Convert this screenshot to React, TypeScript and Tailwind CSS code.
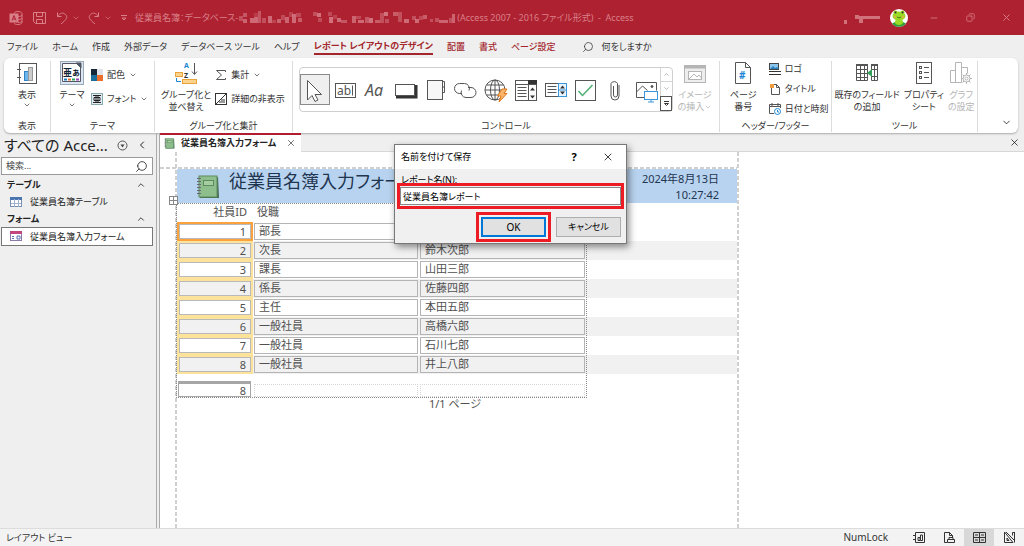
import React, { useState } from 'react';
import { ChevronDown, ChevronUp, ChevronLeft, Search, X, Minus, Copy } from 'lucide-react';

// --- DATA ---
const EMPLOYEES = [
  { id: 1, post: '部長', name: '田中一郎' },
  { id: 2, post: '次長', name: '鈴木次郎' },
  { id: 3, post: '課長', name: '山田三郎' },
  { id: 4, post: '係長', name: '佐藤四郎' },
  { id: 5, post: '主任', name: '本田五郎' },
  { id: 6, post: '一般社員', name: '高橋六郎' },
  { id: 7, post: '一般社員', name: '石川七郎' },
  { id: 8, post: '一般社員', name: '井上八郎' },
];

const MENU = ['ファイル', 'ホーム', '作成', '外部データ', 'データベース ツール', 'ヘルプ'];
const CONTEXT_MENU = ['配置', '書式', 'ページ設定'];

// masked path in the title bar: x, y, w, h, opacity
const MASK = [
  [1, 7, 4, 5, 35], [5, 4, 4, 4, 40], [5, 10, 4, 4, 50], [12, 9, 4, 5, 55], [16, 4, 4, 4, 20], [16, 8, 4, 6, 55],
  [20, 2, 3, 12, 40], [24, 9, 4, 5, 35], [30, 7, 4, 7, 55], [34, 11, 4, 3, 25], [39, 10, 4, 4, 50], [43, 6, 4, 5, 30],
  [47, 8, 4, 6, 50], [51, 3, 4, 5, 25], [54, 5, 4, 9, 55], [58, 4, 5, 4, 30], [60, 9, 4, 4, 45], [75, 3, 4, 4, 35],
  [79, 4, 4, 4, 60], [80, 9, 4, 4, 30], [90, 3, 4, 4, 30], [91, 8, 4, 6, 60], [95, 6, 4, 4, 25], [99, 9, 4, 4, 55],
  [103, 11, 6, 3, 40], [114, 7, 4, 7, 50], [118, 7, 5, 3, 30], [120, 11, 6, 3, 55], [127, 8, 4, 6, 40], [131, 9, 4, 5, 60],
  [137, 11, 5, 3, 45], [142, 4, 4, 10, 35], [146, 3, 4, 4, 60], [147, 10, 4, 4, 35], [155, 3, 5, 4, 45], [160, 3, 4, 10, 35],
  [166, 10, 5, 4, 55], [174, 7, 4, 4, 35], [177, 10, 4, 4, 55], [181, 7, 4, 4, 30], [185, 6, 4, 4, 45], [192, 10, 3, 3, 35],
  [197, 9, 4, 4, 35], [201, 11, 9, 3, 50], [211, 9, 3, 5, 35], [214, 5, 3, 9, 50],
];

type ArtProps = { w?: number; h?: number; children: React.ReactNode };

const Art = ({ w = 24, h = 24, children }: ArtProps) => (
  <svg width={w} height={h} viewBox={`0 0 ${w} ${h}`} fill="none" stroke="#555" strokeWidth="1" className="block shrink-0" aria-hidden="true">
    {children}
  </svg>
);

// --- RIBBON PIECES ---

const Group = ({ label, className, children }: { label: string; className: string; children: React.ReactNode }) => (
  <div className={`flex flex-col border-r border-[#dcdcdc] ${className}`}>
    <div className="flex flex-1">{children}</div>
    <div className="text-center leading-3">{label}</div>
  </div>
);

const BigButton = ({ icon, lines, caret, disabled }: { icon: React.ReactNode; lines: string[]; caret?: boolean; disabled?: boolean }) => (
  <button disabled={disabled} className={`flex flex-col items-center whitespace-nowrap leading-3 ${disabled ? 'text-[#b5b5b5]' : ''}`}>
    <span className="mb-1 flex h-6 items-center">{icon}</span>
    {lines.map((line) => <span key={line}>{line}</span>)}
    {caret && <ChevronDown size={8} />}
  </button>
);

const SmallButton = ({ icon, label, caret }: { icon: React.ReactNode; label: string; caret?: boolean }) => (
  <button className="flex items-center gap-1 whitespace-nowrap leading-3">
    {icon}
    <span>{label}</span>
    {caret && <ChevronDown size={8} />}
  </button>
);

const CONTROLS: { name: string; art: React.ReactNode }[] = [
  { name: '選択', art: <path d="M7.500 5.500V25l4.500-4.500 3 6 3-1.500-3-5.500h6.500z" fill="#fff" /> },
  {
    name: 'テキスト ボックス',
    art: (
      <>
        <rect x="5.500" y="8.500" width="20" height="14" />
        <text x="7" y="20" fontSize="12" fill="#555" stroke="none">ab</text>
        <path d="M22.500 10.500v10" />
      </>
    ),
  },
  { name: 'ラベル', art: <text x="5" y="21" fontSize="16" fontStyle="italic" fill="#555" stroke="none">Aa</text> },
  { name: 'ボタン', art: <><path d="M6 22h20V10" stroke="#333" strokeWidth="3" /><rect x="5.500" y="9.500" width="19" height="11" fill="#fff" /></> },
  { name: 'タブ コントロール', art: <><rect x="7.500" y="5.500" width="15" height="19" fill="#f7f7f7" /><path d="M22.500 6.500h2v11h-2M22.500 12h2" /></> },
  {
    name: 'リンク',
    art: (
      <>
        <path d="M12 18.500h-2.500a5 5 0 0 1 0-10h5a5 5 0 0 1 4.500 7" />
        <path d="M18 12.500h3a5 5 0 0 1 0 10h-5a5 5 0 0 1-4.500-7" />
      </>
    ),
  },
  {
    name: 'Web ブラウザー コントロール',
    art: (
      <>
        <circle cx="15" cy="15" r="10" />
        <ellipse cx="15" cy="15" rx="4.500" ry="10" />
        <path d="M5 15h20M6.500 10h17M6.500 20h17M15 5v20" />
        <path d="M22 14h5l-3 4.500h3L19 27l2-6h-3.500z" fill="#fbb56b" stroke="#e07a1c" />
      </>
    ),
  },
  {
    name: 'コンボ ボックス',
    art: (
      <>
        <rect x="5.500" y="5.500" width="21" height="20" />
        <path d="M5.500 9.500h21M18.500 9.500v16M7.500 12.500h9M7.500 15.500h9M7.500 18.500h9M7.500 21.500h9" />
        <rect x="18" y="5" width="9" height="4" fill="#333" stroke="none" />
        <path d="M20 15.500h5l-2.500-3zM20 20.500h5l-2.500 3z" fill="#333" stroke="none" />
      </>
    ),
  },
  {
    name: 'リスト ボックス',
    art: (
      <>
        <rect x="5.500" y="8.500" width="13" height="13" />
        <path d="M7.500 11.500h9M7.500 14.500h9M7.500 17.500h9" />
        <rect x="18.500" y="8.500" width="8" height="13" stroke="#3a96dd" fill="#eaf5fd" />
        <path d="M18.500 15h8" stroke="#3a96dd" />
        <path d="M20 13.500h5l-2.500-3zM20 16.500h5l-2.500 3z" fill="#333" stroke="none" />
      </>
    ),
  },
  { name: 'チェック ボックス', art: <><rect x="5.500" y="5.500" width="20" height="20" /><path d="m8.500 16 4 4.500 10-10.500" stroke="#4caf70" strokeWidth="1.500" /></> },
  { name: '添付ファイル', art: <path d="M13.500 11v9a2 2 0 0 0 4 0V8.500a3.500 3 0 0 0-6.500 0V21a4 4 0 0 0 8 0V10" /> },
  {
    name: 'イメージ',
    art: (
      <>
        <path d="M14 22.500H6.500v-15h20v8M6.500 17l6-6 5 4.500" />
        <circle cx="22" cy="11.500" r="1" fill="#444" />
        <rect x="14.500" y="16.500" width="13" height="8" fill="#fff" stroke="#3a96dd" />
        <path d="M21 24.500v2.500M18 27h6" stroke="#3a96dd" />
      </>
    ),
  },
];

const ReportIcon = ({ size = 24 }: { size?: number }) => (
  <svg width={size} height={size} viewBox="0 0 24 24" fill="none" stroke="#555" aria-hidden="true">
    <rect x="4.500" y="2.500" width="17" height="20" />
    <path d="M2 8.500h4M2 16.500h4" />
    <rect x="9.500" y="10.500" width="4" height="9" fill="#6db7ec" stroke="#3283c4" />
    <rect x="13.500" y="6.500" width="4" height="13" fill="#ccc" stroke="#999" />
  </svg>
);

const Notebook = ({ size }: { size: number }) => (
  <svg width={size} height={size} viewBox="0 0 24 24" aria-hidden="true">
    <path d="M4 2h18l1 21H4z" fill="#40684b" />
    <rect x="3" y="1" width="18" height="21" fill="#8fbe8d" stroke="#5c8a61" />
    <rect x="7.500" y="5.500" width="10" height="5" fill="#a5cda0" stroke="#5c8a61" />
    <path d="M1 3.500h4M1 6.500h4M1 9.500h4M1 12.500h4M1 15.500h4M1 18.500h4" stroke="#667" />
  </svg>
);

const Frog = () => (
  <svg width="18" height="18" viewBox="0 0 18 18" aria-hidden="true">
    <circle cx="9" cy="9" r="9" fill="#fff" />
    <path d="M2 14.500Q9 10 16 14.500A9 9 0 0 1 2 14.500z" fill="#2f9e3b" />
    <circle cx="5.500" cy="3.500" r="2" fill="#8fce1e" /><circle cx="12.500" cy="3.500" r="2" fill="#8fce1e" />
    <ellipse cx="9" cy="7" rx="6.500" ry="4.500" fill="#9bdb25" />
    <ellipse cx="9" cy="13" rx="4" ry="3" fill="#9bdb25" />
    <circle cx="5.500" cy="3.500" r="1" fill="#333" /><circle cx="12.500" cy="3.500" r="1" fill="#333" />
    <circle cx="5" cy="8" r="1" fill="#f5a14b" /><circle cx="13" cy="8" r="1" fill="#f5a14b" />
    <path d="M7 8q2 2 4 0" stroke="#467a12" fill="none" />
  </svg>
);

const TitleBar = () => (
  <header className="flex h-[35px] shrink-0 items-center bg-[#ae2131] pl-2 text-[9px] text-[#d98089]">
    <div className="flex w-[127px] shrink-0 items-center">
      <svg width="16" height="16" viewBox="0 0 16 16" fill="none" stroke="currentColor" aria-hidden="true">
        <path d="M6 3.500c0-1 2-2 4-2s4 1 4 2v9c0 1-2 2-4 2s-3-.5-4-1M14 5c0 1-2 1.500-4 1.500M14 8c0 1-2 1.500-4 1.500M14 11c0 1-2 1.500-4 1.500" />
        <rect x="2" y="4" width="8" height="8" fill="currentColor" />
        <path d="M4 10.500 6 5.500l2 5M5 9h2" stroke="#ae2131" />
      </svg>
      <button aria-label="保存" className="ml-2">
        <Art w={16} h={14}><path d="M1.500 1.500h12v11h-10l-2-2zM4.500 1.500v4h6v-4M4.500 12.500v-4h6v4" stroke="#d98089" /></Art>
      </button>
      <button aria-label="元に戻す" className="ml-2 flex items-center gap-1">
        <Art w={12} h={14}><path d="M1.500 1.500v4h4M1.500 5.500C4 2 7 1 9.500 3.500S11 8 5 13" stroke="#d98089" /></Art>
        <ChevronDown size={8} />
      </button>
      <button aria-label="やり直し" className="ml-2 flex items-center gap-1">
        <Art w={12} h={14}><path d="M10.500 1.500v4h-4M10.500 5.500C8 2 5 1 2.500 3.500S1 8 7 13" stroke="#d98089" /></Art>
        <ChevronDown size={8} />
      </button>
      <button aria-label="カスタマイズ" className="ml-2"><Art w={8} h={8}><path d="M1 1.500h6M2 4h4L4 6z" stroke="#d98089" /></Art></button>
    </div>
    <span className="whitespace-nowrap">従業員名簿：データベース-</span>
    <svg width="219" height="18" viewBox="0 0 219 18" fill="#e9a7ae" aria-hidden="true">
      {MASK.map(([x, y, w, h, o], i) => <rect key={i} x={x} y={y} width={w} height={h} opacity={o / 100} />)}
    </svg>
    <span className="flex-1 whitespace-pre">(Access 2007 - 2016 ファイル形式)  -  Access</span>
    <svg width="42" height="14" viewBox="0 0 42 14" fill="#e9a7ae" opacity="0.600" aria-hidden="true">
      <path d="M0 9h3v4H0zM11 4h4v4h-4zM15 5h4v7h-4zM19 5h17v3H19z" />
    </svg>
    <span className="ml-1"><Frog /></span>
    <div className="flex items-center">
      <button aria-label="最小化" className="flex w-9 justify-center pl-4"><Minus size={10} strokeWidth={2} /></button>
      <button aria-label="元のサイズに戻す" className="flex w-9 justify-center pl-4"><Copy size={9} strokeWidth={2} className="-scale-x-100" /></button>
      <button aria-label="閉じる" className="mr-2 flex w-9 justify-center pl-4"><X size={11} strokeWidth={2} /></button>
    </div>
  </header>
);

const MenuBar = () => (
  <nav className="flex h-[23px] shrink-0 items-center gap-[14px] whitespace-nowrap px-[7px] text-[9px] leading-[14px] text-[#333]">
    {MENU.map((m) => <button key={m}>{m}</button>)}
    <button className="border-b-2 border-[#a4262c] font-bold text-[#a4262c]">レポート レイアウトのデザイン</button>
    {CONTEXT_MENU.map((m) => <button key={m} className="font-medium text-[#a4262c]">{m}</button>)}
    <button className="ml-3 flex items-center gap-2"><Search size={12} strokeWidth={1.5} className="-scale-x-100" />何をしますか</button>
  </nav>
);

const Ribbon = () => (
  <section className="ml-1 mr-[6px] flex h-[75px] shrink-0 rounded-md bg-white pb-px pt-[3px] text-[9px] text-[#333] shadow-[0_1px_2px_#aaa]">
    <Group label="表示" className="w-[47px]">
      <div className="flex flex-1 justify-center"><BigButton icon={<ReportIcon />} lines={['表示']} caret /></div>
    </Group>
    <Group label="テーマ" className="w-[104px]">
      <div className="flex flex-1 gap-[6px] pl-2">
        <BigButton
          icon={
            <Art w={26} h={26}>
              <rect x="1.500" y="1.500" width="23" height="23" fill="#dbe7f3" stroke="#9aa9b8" />
              <path d="M3.500 3.500h14l4 4v14h-18z" fill="#fff" stroke="#556" />
              <path d="M17 3h5v5z" fill="#445b74" />
              <text x="4" y="16" fontSize="9" fill="#123" stroke="none" fontWeight="700">亜ぁ</text>
              <path d="M5 19.500h3" stroke="#1b7ebd" strokeWidth="2" /><path d="M9 19.500h3" stroke="#e46c2b" strokeWidth="2" />
              <path d="M13 19.500h3" stroke="#26a65b" strokeWidth="2" /><path d="M17 19.500h3" stroke="#9b3fb5" strokeWidth="2" />
            </Art>
          }
          lines={['テーマ']}
          caret
        />
        <div className="flex flex-col gap-3 pt-2">
          <SmallButton
            icon={<Art w={12} h={12}><g stroke="none"><path d="M0 0h6v6H0z" fill="#16263a" /><path d="M6 0h6v6H6z" fill="#dde3e8" /><path d="M0 6h6v6H0z" fill="#1a6e9c" /><path d="M6 6h6v6H6z" fill="#ec6e2c" /></g></Art>}
            label="配色"
            caret
          />
          <SmallButton
            icon={<Art w={12} h={12}><rect x=".5" y=".5" width="11" height="11" fill="#e4edf5" stroke="#8aa" /><path d="M2 2.500h8M2 9.500h8M3 4.500h6v3H3zM5 2.500v7M7 2.500v7" stroke="#222" /></Art>}
            label="フォント"
            caret
          />
        </div>
      </div>
    </Group>
    <Group label="グループ化と集計" className="w-[138px]">
      <div className="flex flex-1 gap-1 pl-[6px]">
        <BigButton
          icon={
            <Art w={24} h={24}>
              <text x="10" y="7" fontSize="7" fill="#1d87d6" stroke="none" fontWeight="700">A</text>
              <text x="10" y="17" fontSize="7" fill="#333" stroke="none" fontWeight="700">Z</text>
              <path d="M20.500 2v11M18 10.500l2.500 3 2.500-3" />
              <rect x="1.500" y="11.500" width="7" height="4" fill="#fbd38c" stroke="#e8a33a" />
              <rect x="8.500" y="18.500" width="14" height="4" fill="#fbd38c" stroke="#e8a33a" />
              <path d="M2.500 17v3.500H7" stroke="#1d87d6" />
            </Art>
          }
          lines={['グループ化と', '並べ替え']}
        />
        <div className="flex flex-col gap-3 pt-2">
          <SmallButton icon={<Art w={12} h={12}><path d="M10.500 3V1.500h-9l5 4.500-5 4.500h9V9" /></Art>} label="集計" caret />
          <SmallButton icon={<Art w={12} h={12}><rect x=".5" y=".5" width="11" height="11" stroke="#333" /><path d="M1 11 11 1M4 9h6M6 7h4" stroke="#333" /></Art>} label="詳細の非表示" />
        </div>
      </div>
    </Group>
    <Group label="コントロール" className="min-w-0 flex-1">
      <div className="flex flex-1 justify-center gap-1 pt-[6px]">
        <div className="flex h-[45px] rounded border border-[#cfcfcf]">
          {CONTROLS.map((c, i) => (
            <button key={c.name} aria-label={c.name} className={`my-[6px] h-[31px] w-[30px] ${i === 0 ? 'bg-[#efefef] outline -outline-offset-1 outline-[#8a8a8a]' : ''}`}>
              <Art w={30} h={30}>{c.art}</Art>
            </button>
          ))}
          <div className="flex w-3 flex-col text-[#888]">
            <button aria-label="上へ" className="flex flex-1 items-center justify-center border-b border-l border-[#d5d5d5]"><ChevronUp size={7} /></button>
            <button aria-label="下へ" className="flex flex-1 items-center justify-center border-l border-[#d5d5d5]"><ChevronDown size={7} /></button>
            <button aria-label="その他" className="flex flex-1 items-center justify-center border border-[#555]"><Art w={7} h={7}><path d="M1 1.500h5M1.500 3.500h4l-2 2z" stroke="#333" /></Art></button>
          </div>
        </div>
        <div className="-mt-[6px] flex w-9 justify-center">
          <button disabled className="flex flex-col items-center whitespace-nowrap leading-3 text-[#b5b5b5]">
            <span className="mb-1 flex h-6 items-center">
              <Art w={24} h={24}><g stroke="#b5b5b5"><rect x="1.500" y="4.500" width="21" height="17" fill="#eee" /><path d="M1 6h22" strokeWidth="3" /><rect x="5.500" y="10.500" width="13" height="8" fill="#fff" /><path d="m6 18 5-5 3 3 2-2 3 4" /></g></Art>
            </span>
            <span>イメージ</span>
            <span className="flex items-center">の挿入<ChevronDown size={8} /></span>
          </button>
        </div>
      </div>
    </Group>
    <Group label="ヘッダー/フッター" className="w-[112px]">
      <div className="flex flex-1 gap-3 pl-[10px]">
        <BigButton
          icon={<Art w={20} h={24}><path d="M2.500 1.500h10l5 5v16h-15zM12.500 1.500v5h5" /><text x="6" y="18" fontSize="10" fill="#1d87d6" stroke="none" fontWeight="700">#</text></Art>}
          lines={['ページ', '番号']}
        />
        <div className="flex flex-col gap-[8px] pt-[2px]">
          <SmallButton icon={<Art w={12} h={12}><rect x=".5" y=".5" width="9" height="6" fill="#8cc5ee" stroke="#444" /><path d="m1 6 3-3 2 2 2-1 2 2" fill="#277fbe" stroke="none" /><path d="M0 8.500h12M0 11.500h12" stroke="#333" /></Art>} label="ロゴ" />
          <SmallButton icon={<Art w={12} h={12}><path d="M2.500 1.500h5l3 3v7h-8zM7.500 1.500v3h3" /><rect x="1" y="1" width="4" height="4" fill="#f19b3d" stroke="none" /></Art>} label="タイトル" />
          <SmallButton icon={<Art w={12} h={12}><path d="M5 10.500H.5v-9h11V5M.5 3.500h11M3 0v3M9 0v3" /><circle cx="8.500" cy="8.500" r="3" fill="#fff" stroke="#1d87d6" /><path d="M8.500 7v2H10" stroke="#1d87d6" /></Art>} label="日付と時刻" />
        </div>
      </div>
    </Group>
    <Group label="ツール" className="w-[146px]">
      <div className="flex flex-1 justify-center gap-1">
        <BigButton
          icon={<Art w={24} h={24}><path d="M1.500 3.500h11v16h-11zM1.500 8.500h11M1.500 12.500h11M1.500 16.500h11M5.500 3.500v16M9.500 3.500v16M16.500 3.500h6v16h-6zM16.500 8.500h6M16.500 15.500h6M19.500 3.500v16" /><path d="M1 3h12v2H1zM16 3h7v2h-7z" fill="#555" stroke="none" /><path d="m12 12 5-4v8z" fill="#36a05a" stroke="none" /></Art>}
          lines={['既存のフィールド', 'の追加']}
        />
        <BigButton
          icon={<Art w={18} h={24}><rect x="1.500" y="1.500" width="15" height="21" /><rect x="4.500" y="5.500" width="2" height="2" /><rect x="4.500" y="10.500" width="2" height="2" /><rect x="4.500" y="15.500" width="2" height="2" /><path d="M9 6.500h5M9 11.500h5M9 16.500h5" /></Art>}
          lines={['プロパティ', 'シート']}
        />
        <BigButton
          icon={<Art w={24} h={24}><g stroke="#b5b5b5"><path d="M1.500 9.500h5v12h-5zM6.500 1.500h6v20h-6zM12.500 6.500h6v6" /><circle cx="17.500" cy="17.500" r="3.500" fill="#fff" /><circle cx="17.500" cy="17.500" r="1.500" /><path d="M17.500 12v2M17.500 21v2M12 17.500h2M21 17.500h2M13.500 13.500l1.500 1.500M20 20l1.500 1.500M13.500 21.500 15 20M20 15l1.500-1.500" /></g></Art>}
          lines={['グラフ', 'の設定']}
          disabled
        />
      </div>
    </Group>
    <button aria-label="リボンを折りたたむ" className="flex w-10 items-end justify-end pb-1 pr-[6px]"><ChevronDown size={11} /></button>
  </section>
);

const NavPane = () => (
  <aside className="flex w-[156px] shrink-0 flex-col text-[9px] leading-4 text-[#222]">
    <div className="flex h-6 items-center pl-1 pr-2">
      <h2 className="flex-1 whitespace-nowrap text-[15px]">すべての Acce...</h2>
      <button aria-label="一覧" className="mr-2"><Art w={11} h={11}><circle cx="5.500" cy="5.500" r="4.500" /><path d="M3.500 4.500h4l-2 3z" fill="#444" stroke="none" /></Art></button>
      <button aria-label="閉じる"><ChevronLeft size={12} /></button>
    </div>
    <div className="mx-px mr-[3px] flex h-[18px] items-center border border-[#999] bg-white px-1">
      <input aria-label="検索" placeholder="検索..." className="w-full min-w-0 flex-1 outline-none placeholder:text-[#444]" />
      <Search size={13} strokeWidth={1.500} className="-scale-x-100" />
    </div>
    <h3 className="mt-[2px] flex items-center justify-between pl-[7px] pr-[10px] font-bold">テーブル<ChevronUp size={10} /></h3>
    <button className="flex h-[18px] items-center gap-2 pl-[10px]">
      <Art w={12} h={11}><rect x=".5" y=".5" width="11" height="9" fill="#fff" stroke="#7890b0" /><path d="M0 1.500h12" stroke="#4a74b0" strokeWidth="3" /><path d="M1 6.500h10M4.500 2v8M8.500 2v8" stroke="#9fb2cc" /></Art>
      従業員名簿テーブル
    </button>
    <h3 className="flex items-center justify-between pl-[7px] pr-[10px] font-bold">フォーム<ChevronUp size={10} /></h3>
    <button className="mx-px mr-[3px] flex h-[19px] items-center gap-2 border border-[#777] bg-white pl-2">
      <Art w={12} h={11}><rect x=".5" y=".5" width="11" height="9" fill="#fff" stroke="#8a7aa8" /><path d="M0 1.500h12" stroke="#c2467d" strokeWidth="3" /><path d="M2 5.500h2M2 7.500h2M7 5h3v3H7z" stroke="#5b6bb0" /></Art>
      従業員名簿入力フォーム
    </button>
  </aside>
);

const MarginLine = () => (
  <div className="w-[2px] shrink-0 bg-[repeating-linear-gradient(to_bottom,#d0d0d0_0_4px,transparent_4px_6px)]" />
);

const Report = () => (
  <div className="flex flex-1 bg-white pl-[15px] text-[11px] text-[#505050]">
    <MarginLine />
    <div className="flex w-[560px] flex-col">
      <div className="-ml-[17px] h-[17px] pt-[15px]">
        <div className="h-[2px] bg-[repeating-linear-gradient(to_right,#d0d0d0_0_4px,transparent_4px_6px)]" />
      </div>
      <div className="flex h-[34px] bg-[#b8d3ef] pl-[19px] pr-[18px] text-[#1f3550]">
        <span className="mr-[9px] mt-[6px]"><Notebook size={24} /></span>
        <h1 className="flex-1 whitespace-nowrap text-[18px] leading-6">従業員名簿入力フォーム</h1>
        <p className="text-right leading-4"><span className="block pt-[2px]">2024年8月13日</span><span className="block">10:27:42</span></p>
      </div>
      <div className="relative">
        <table className="w-full table-fixed border-collapse">
          <colgroup><col className="w-[76px]" /><col className="w-[166px]" /><col className="w-[167px]" /><col /></colgroup>
          <thead>
            <tr className="h-[19px]">
              <th className="p-0 pr-[6px] text-right font-normal">社員ID</th>
              <th className="p-0 pl-1 text-left font-normal">役職</th>
              <th className="p-0 pl-1 text-left font-normal">氏名</th>
              <td />
            </tr>
          </thead>
          <tbody>
            {EMPLOYEES.map((e, i) => (
              <tr key={e.id} className={i % 2 ? 'bg-[#f1f1f1]' : ''}>
                <td className="p-0">
                  <div className={`h-[19px] border-2 ${i === 0 ? 'border-[#fca23c]' : 'border-[#fde29c]'}`}>
                    <div className="h-[15px] border border-[#b9b9b9] pr-1 text-right leading-[14px]">{e.id}</div>
                  </div>
                </td>
                <td className="p-px"><div className="h-[17px] border border-[#b4b4b4] pl-1 leading-[14px]">{e.post}</div></td>
                <td className="p-px"><div className="h-[17px] border border-[#b4b4b4] pl-1 leading-[14px]">{e.name}</div></td>
                <td />
              </tr>
            ))}
          </tbody>
          <tfoot>
            <tr className="h-6 align-bottom">
              <td className="p-px pr-[2px]"><div className="h-[16px] border border-t-[3px] border-[#a6a6a6] pr-1 text-right leading-[14px]">8</div></td>
              <td className="p-px"><div className="h-[13px] border border-dotted border-[#d5d5d5]" /></td>
              <td className="p-px"><div className="h-[13px] border border-dotted border-[#d5d5d5]" /></td>
              <td />
            </tr>
          </tfoot>
        </table>
        {/* layout selection frame */}
        <div className="pointer-events-none absolute -left-px bottom-0 top-0 w-[411px] border border-dotted border-[#888]" />
        <span className="absolute -left-2 -top-[7px] bg-white"><Art w={9} h={9}><rect x=".5" y=".5" width="8" height="8" stroke="#888" /><path d="M4.500 1v7M1 4.500h7" stroke="#888" /></Art></span>
      </div>
      <p className="pr-1 text-center leading-3">1/1 ページ</p>
    </div>
    <MarginLine />
  </div>
);

const SaveDialog = ({ onClose }: { onClose: () => void }) => {
  const [name, setName] = useState('従業員名簿レポート');

  return (
    <div role="dialog" aria-labelledby="save-title" className="absolute left-[394px] top-[144px] w-[233px] border border-[#777] bg-[#f0f0f0] text-[9px] text-black shadow-[2px_3px_7px_rgba(0,0,0,0.45)]">
      <div className="flex h-6 items-center bg-white pl-[6px]">
        <h2 id="save-title" className="flex-1">名前を付けて保存</h2>
        <button aria-label="ヘルプ" className="w-8 text-[11px] font-bold">?</button>
        <button aria-label="閉じる" onClick={onClose} className="flex w-9 justify-center"><X size={12} strokeWidth={1.5} /></button>
      </div>
      <form className="px-[2px] pt-1" onSubmit={(e) => { e.preventDefault(); onClose(); }}>
        <label htmlFor="report-name" className="block h-[10px] pl-1 leading-[14px]">レポート名(N):</label>
        <div className="relative border-[3px] border-[#ed1c24] bg-[#f0f0f0]">
          <input id="report-name" value={name} onChange={(e) => setName(e.target.value)} className="my-px block h-[18px] w-full border border-[#888] bg-white px-[2px] outline-none" />
        </div>
        <div className="flex items-center justify-end pb-px pr-[3px] pt-[3px]">
          <div className="mr-[5px] border-[3px] border-[#ed1c24] p-[2px]">
            <button type="submit" className="block h-5 w-[65px] border-2 border-[#0078d7] bg-[#e1e1e1] text-[10px] leading-4">OK</button>
          </div>
          <button type="button" onClick={onClose} className="h-5 w-[65px] border border-[#adadad] bg-[#e1e1e1]">キャンセル</button>
        </div>
      </form>
    </div>
  );
};

const StatusBar = () => (
  <footer className="flex h-[18px] shrink-0 items-center border-t border-[#dcdcdc] bg-[#f3f3f3] pl-[6px] text-[9px] text-[#333]">
    <span className="flex-1">レイアウト ビュー</span>
    <span className="mr-4 text-[10px]">NumLock</span>
    <button aria-label="レポート ビュー" className="flex h-full w-[30px] items-center justify-center"><Art w={13} h={13}><path d="M2.500 1.500h9v10h-9zM0 4.500h3M0 8.500h3M5 6.500h2v3H5zM7.500 4h2v5.500h-2z" stroke="#333" /></Art></button>
    <button aria-label="印刷プレビュー" className="flex h-full w-[30px] items-center justify-center"><Art w={13} h={13}><path d="M4 11.500H1.500v-10h5l3 3v2M6.500 1.500v3h3M4.500 8.500h7v3h-7zM6 8V6.500h4V8" stroke="#333" /></Art></button>
    <button aria-label="レイアウト ビュー" className="flex h-full w-[30px] items-center justify-center bg-[#d8d8d8]"><Art w={13} h={13}><path d="M.5 1.500h12v10H.5zM6.500 1.500v10M.5 6.500h12M2 4h3M8 4h3M2 9h3M8 9h3" stroke="#333" /></Art></button>
    <button aria-label="デザイン ビュー" className="flex h-full w-[30px] items-center justify-center"><Art w={13} h={13}><path d="M1.500 1v10.500H10zM4 7v2.500h2zM11.500 1v10.500M3 1l8 8M11.500 1.500h-2v3" stroke="#333" /></Art></button>
  </footer>
);

export default function App() {
  const [dialogOpen, setDialogOpen] = useState(true);

  return (
    <div className="relative flex h-screen flex-col overflow-hidden bg-[#efefef] font-['Noto_Sans','Noto_Sans_CJK_JP',sans-serif] [font-feature-settings:'palt']">
      <TitleBar />
      <MenuBar />
      <Ribbon />
      <main className="flex min-h-0 flex-1">
        <NavPane />
        <div className="flex min-w-0 flex-1 flex-col border-l-4 border-double border-[#aaa]">
          <div className="flex h-[19px] shrink-0 items-center justify-between border-b border-[#d8d8d8]">
            <div className="flex h-[19px] items-center border-t-2 border-[#b01c30] bg-white pl-1 pr-[5px] text-[9px] font-bold text-[#222]">
              <span className="mr-[6px]"><Notebook size={11} /></span>
              従業員名簿入力フォーム
              <button aria-label="タブを閉じる" className="ml-[10px]"><X size={10} strokeWidth={1.5} /></button>
            </div>
            <button aria-label="ドキュメントを閉じる" className="mr-1"><X size={11} strokeWidth={1.5} /></button>
          </div>
          <Report />
        </div>
      </main>
      <StatusBar />
      {dialogOpen && <SaveDialog onClose={() => setDialogOpen(false)} />}
    </div>
  );
}
